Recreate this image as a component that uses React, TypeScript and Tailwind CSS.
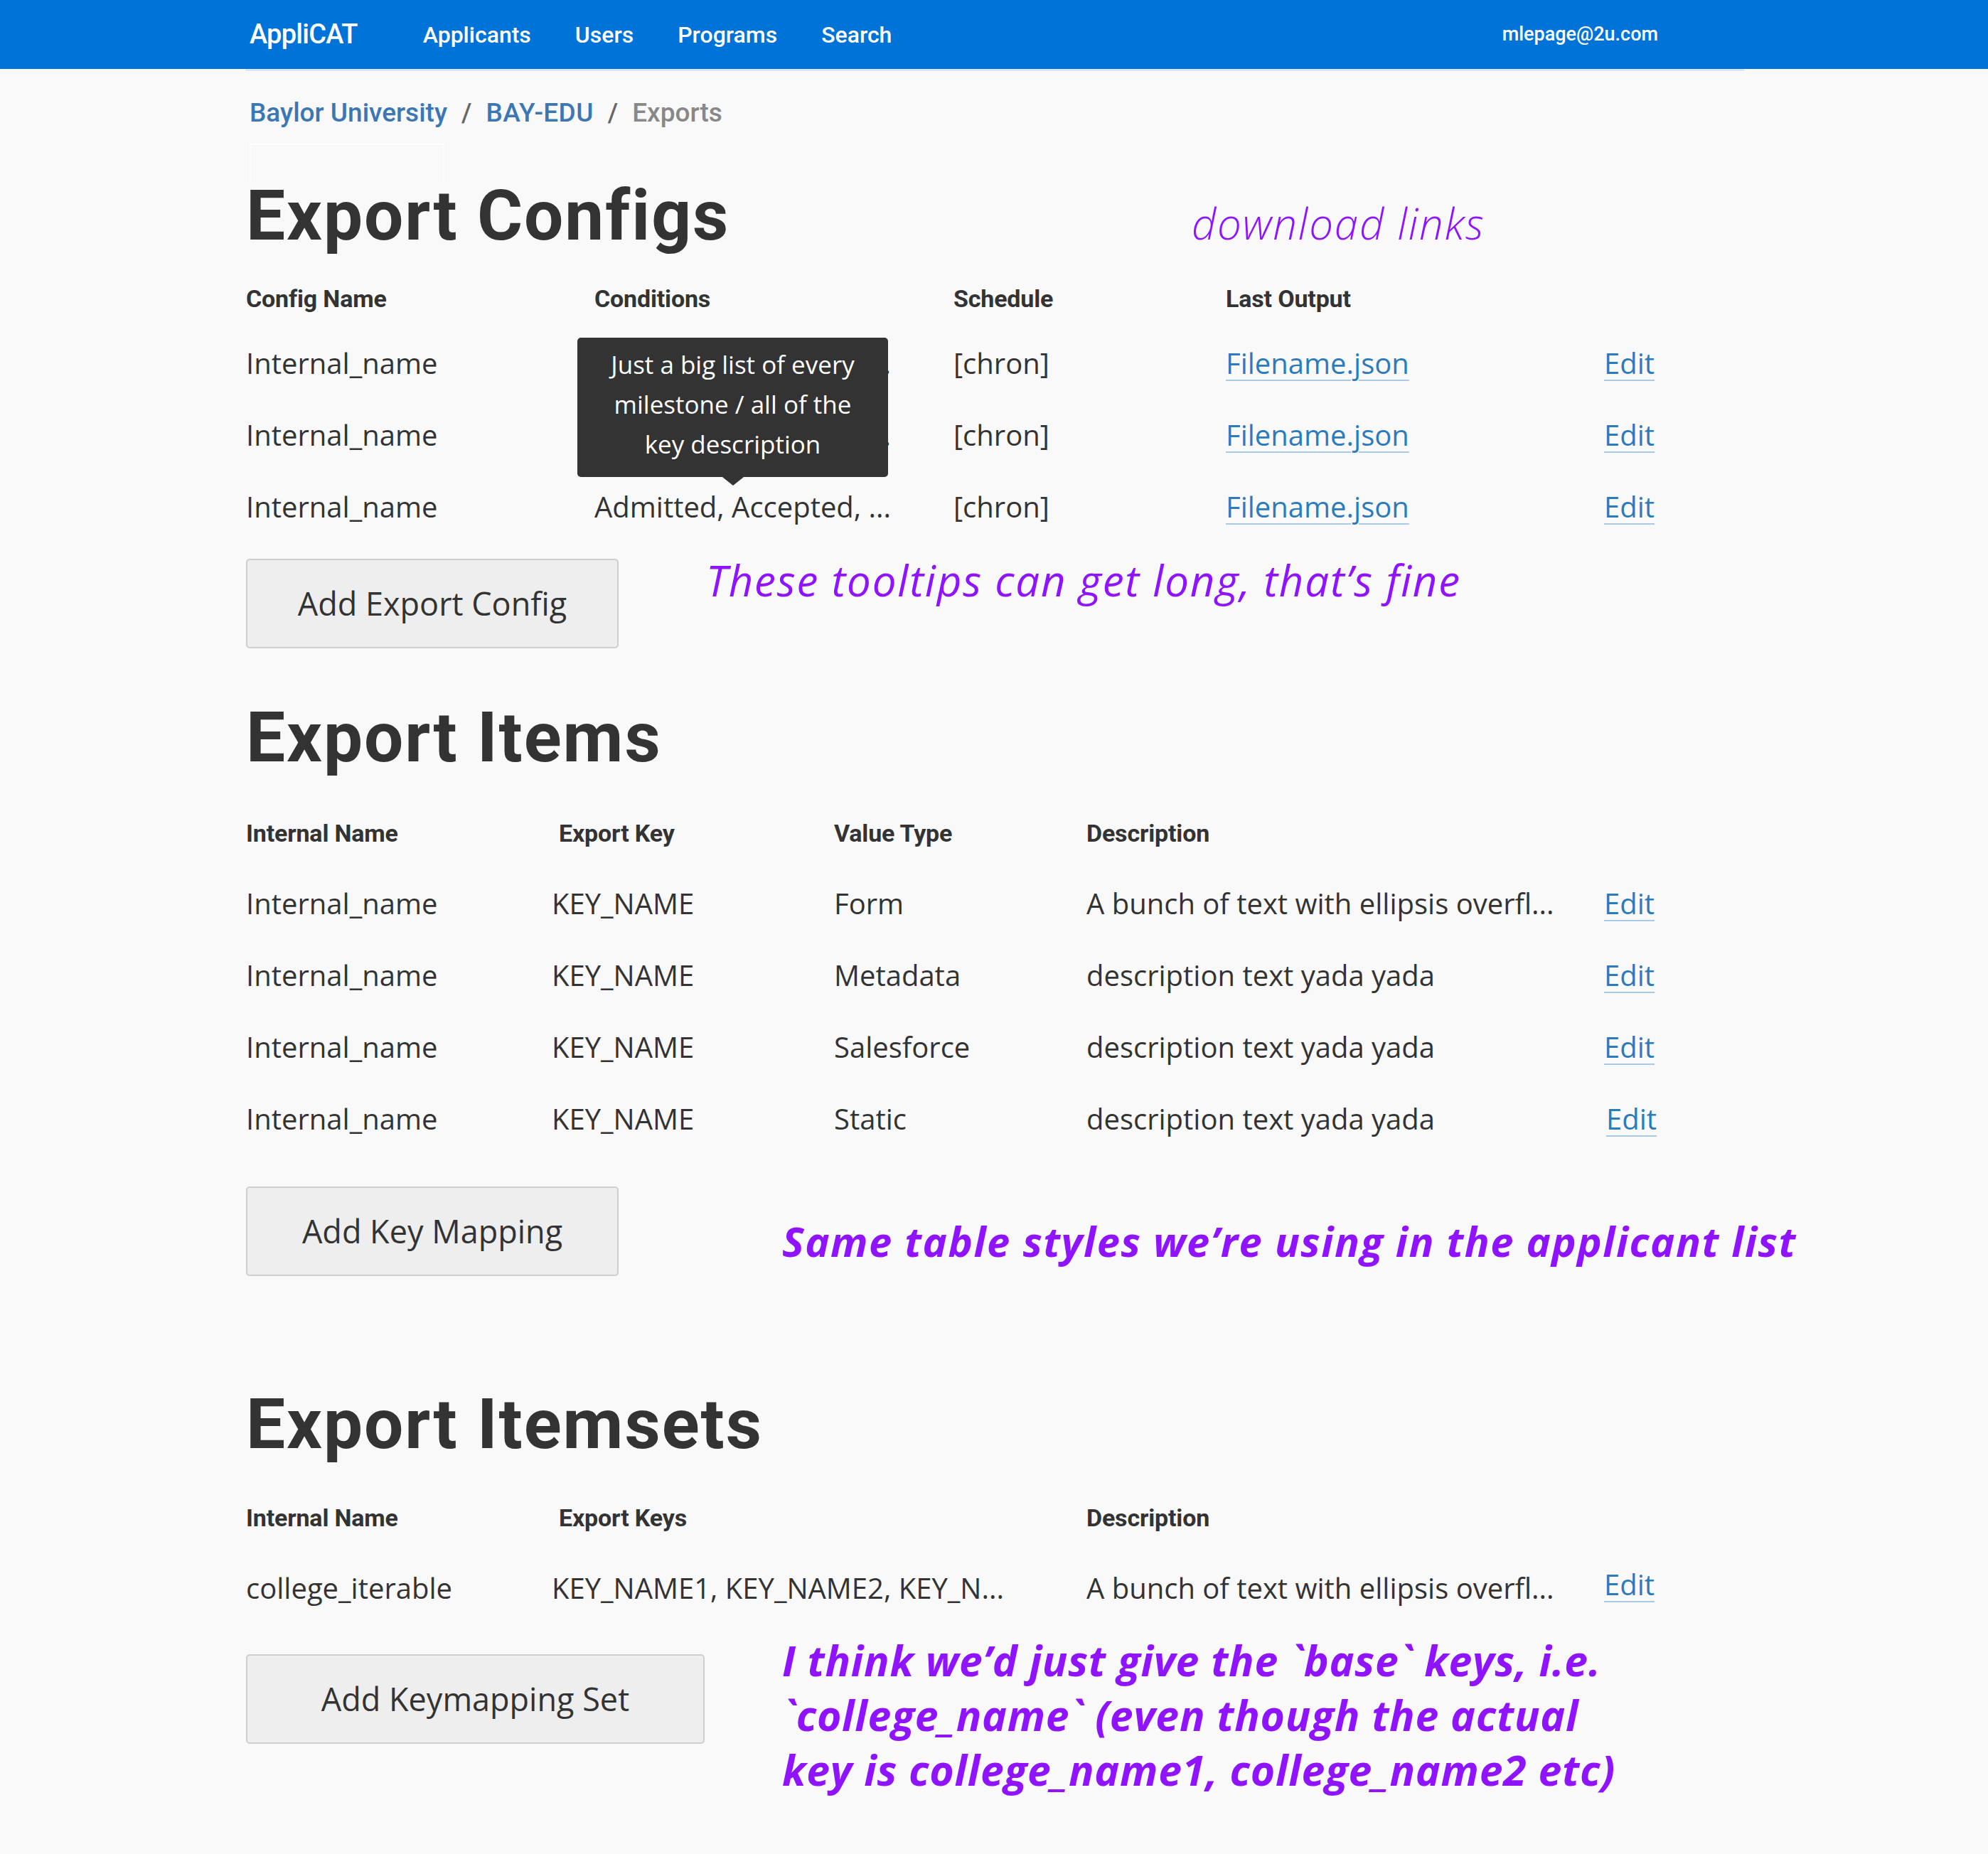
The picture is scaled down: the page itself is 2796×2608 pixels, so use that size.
const head = "font-['Roboto','Liberation_Sans',sans-serif]";
const body = "font-['Open_Sans','Liberation_Sans',sans-serif]";
const note = "font-['Open_Sans','Liberation_Sans',sans-serif] italic text-[#9013fe]";

function A({ children, className = "" }: { children: React.ReactNode; className?: string }) {
  return (
    <a className={`text-[#2c7bbd] underline decoration-[#a8cae8] decoration-2 underline-offset-[8px] ${className}`}>
      {children}
    </a>
  );
}

function Th({ children, className = "" }: { children?: React.ReactNode; className?: string }) {
  return (
    <div className={`flex items-center ${head} font-bold text-[34px] text-[#333] tracking-[-0.005em] ${className}`}>
      {children}
    </div>
  );
}

function Td({ children, className = "" }: { children?: React.ReactNode; className?: string }) {
  return (
    <div className={`flex items-center h-[101px] ${body} text-[40px] text-[#333] whitespace-nowrap ${className}`}>
      {children}
    </div>
  );
}

function Button({ label, w }: { label: string; w: string }) {
  return (
    <button
      className={`${w} h-[126px] shrink-0 bg-[#eeeeee] border-2 border-[#cfcfcf] rounded-[5px] ${body} text-[45px] text-[#333]`}
    >
      {label}
    </button>
  );
}

function Title({ children }: { children: React.ReactNode }) {
  return (
    <h1 className={`${head} font-bold text-[98px] leading-none text-[#333] tracking-[0.02em]`}>{children}</h1>
  );
}

export default function App() {
  const configs = [0, 1, 2];
  const items = [
    ["Form", "A bunch of text with ellipsis overfl..."],
    ["Metadata", "description text yada yada"],
    ["Salesforce", "description text yada yada"],
    ["Static", "description text yada yada"],
  ];

  return (
    <div className="min-h-[2608px] w-full bg-[#f9f9f9]">
      <header className="h-[97px] bg-[#0073d8] flex items-center">
        <div className={`ml-[351px] w-[1981px] flex items-center justify-between text-white ${head}`}>
          <div className="flex items-center">
            <span className="text-[38px] font-medium tracking-[-0.02em]">AppliCAT</span>
            <nav className="flex items-center gap-[62px] ml-[92px] text-[32px] font-medium">
              <span>Applicants</span>
              <span>Users</span>
              <span>Programs</span>
              <span>Search</span>
            </nav>
          </div>
          <span className="text-[27px] font-medium">mlepage@2u.com</span>
        </div>
      </header>
      <div className="ml-[345px] w-[2108px] h-[3px] bg-[#dce8f5]" />

      <main className="pl-[346px]">
        <div className={`mt-[29px] h-[60px] leading-[60px] pl-[5px] ${head} font-medium text-[37px]`}>
          <span className="text-[#3b77b5]">Baylor University</span>
          <span className="text-[#666] mx-[20px]">/</span>
          <span className="text-[#3b77b5] tracking-[0.01em]">BAY-EDU</span>
          <span className="text-[#666] mx-[20px]">/</span>
          <span className="text-[#888]">Exports</span>
        </div>
        <div className="mt-[13px] ml-[5px] h-[53px] w-[274px] border-2 border-b-0 border-white" />

        {/* Export Configs */}
        <div className="grid grid-cols-[1330px_auto] items-baseline">
          <Title>Export Configs</Title>
          <span className={`${note} font-light text-[60px] leading-none tracking-[0.03em]`}>download links</span>
        </div>

        <div className="mt-[28px] grid grid-cols-[490px_505px_383px_532px_auto] w-[2100px]">
          <Th className="h-[79px]">Config Name</Th>
          <Th className="h-[79px]">Conditions</Th>
          <Th className="h-[79px]">Schedule</Th>
          <Th className="h-[79px]">Last Output</Th>
          <Th className="h-[79px]" />
          {configs.map((i) => (
            <div key={i} className="contents">
              <Td>Internal_name</Td>
              <Td className="relative">
                Admitted, Accepted, ...
                {i === 2 && (
                  <div className="absolute left-[-24px] top-[-187px] w-[437px] h-[196px] bg-[#333] rounded-[5px] flex items-center justify-center whitespace-normal">
                    <p className={`${body} text-white text-[35px] leading-[56px] text-center w-[390px] pb-[8px]`}>
                      Just a big list of every milestone / all of the key description
                    </p>
                    <div className="absolute top-full left-1/2 -translate-x-1/2 w-0 h-0 border-x-[15px] border-x-transparent border-t-[12px] border-t-[#333]" />
                  </div>
                )}
              </Td>
              <Td>[chron]</Td>
              <Td>
                <A>Filename.json</A>
              </Td>
              <Td>
                <A>Edit</A>
              </Td>
            </div>
          ))}
        </div>

        <div className="mt-[23px] flex items-start">
          <Button label="Add Export Config" w="w-[524px]" />
          <p className={`${note} text-[60px] leading-none tracking-[0.03em] ml-[123px]`}>
            These tooltips can get long, that’s fine
          </p>
        </div>

        {/* Export Items */}
        <div className="mt-[77px]">
          <Title>Export Items</Title>
        </div>

        <div className="mt-[37px] grid grid-cols-[430px_397px_355px_728px_auto] w-[2100px]">
          <Th className="h-[96px]">Internal Name</Th>
          <Th className="h-[96px] pl-[10px]">Export Key</Th>
          <Th className="h-[96px]">Value Type</Th>
          <Th className="h-[96px]">Description</Th>
          <Th className="h-[96px]" />
          {items.map(([type, desc], i) => (
            <div key={i} className="contents">
              <Td>Internal_name</Td>
              <Td>KEY_NAME</Td>
              <Td>{type}</Td>
              <Td>{desc}</Td>
              <Td className={i === 3 ? "pl-[3px]" : ""}>
                <A>Edit</A>
              </Td>
            </div>
          ))}
        </div>

        <div className="mt-[45px] flex items-start">
          <Button label="Add Key Mapping" w="w-[524px]" />
          <p className={`${note} font-bold text-[58px] leading-none tracking-[0.025em] ml-[230px] pt-[48px]`}>
            Same table styles we’re using in the applicant list
          </p>
        </div>

        {/* Export Itemsets */}
        <div className="mt-[160px]">
          <Title>Export Itemsets</Title>
        </div>

        <div className="mt-[34px] grid grid-cols-[430px_752px_728px_auto] w-[2100px]">
          <Th className="h-[96px]">Internal Name</Th>
          <Th className="h-[96px] pl-[10px]">Export Keys</Th>
          <Th className="h-[96px]">Description</Th>
          <Th className="h-[96px]" />
          <Td>college_iterable</Td>
          <Td>KEY_NAME1, KEY_NAME2, KEY_N...</Td>
          <Td>A bunch of text with ellipsis overfl...</Td>
          <Td className="pb-[10px]">
            <A>Edit</A>
          </Td>
        </div>

        <div className="mt-[13px] flex items-start pb-[150px]">
          <div className="mt-[30px]">
            <Button label="Add Keymapping Set" w="w-[645px]" />
          </div>
          <p className={`${note} font-bold text-[59px] leading-[77px] tracking-[0.012em] ml-[109px] whitespace-nowrap`}>
            I think we’d just give the `base` keys, i.e.
            <br />
            `college_name` (even though the actual
            <br />
            key is college_name1, college_name2 etc)
          </p>
        </div>
      </main>
    </div>
  );
}
